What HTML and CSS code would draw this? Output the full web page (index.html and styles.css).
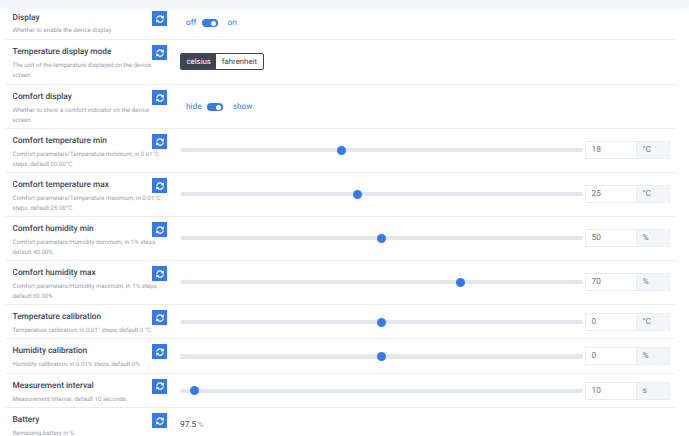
FILE: index.html
```html
<!DOCTYPE html>
<html lang="en">
<head>
    <meta charset="UTF-8">
    <meta name="viewport" content="width=device-width, initial-scale=1.0">
    <title>Device settings</title>
    <link rel="stylesheet" href="styles.css">
</head>
<body>
    <svg class="defs" width="0" height="0">
        <symbol id="sync" viewBox="0 0 512 512">
            <path d="M370.7 133.3C339.5 104 298.9 88 255.800 88c-77.500.100-144.300 53.200-162.800 126.900-1.300 5.400-6.100 9.200-11.700 9.200H24.100c-7.500 0-13.200-6.800-11.800-14.200C33.900 94.900 134.800 8 256 8c66.400 0 126.800 26.100 171.300 68.700L463 41c15.100-15.100 41-4.400 41 17v134c0 13.300-10.700 24-24 24H346c-21.400 0-32.100-25.900-17-41zM32 296h134c21.400 0 32.100 25.900 17 41l-41.700 41.700c31.200 29.300 71.800 45.300 114.900 45.300 77.400-.100 144.300-53.100 162.800-126.800 1.300-5.400 6.100-9.200 11.700-9.200h57.300c7.500 0 13.200 6.800 11.800 14.200C478.100 417.100 377.200 504 256 504c-66.400 0-126.800-26.100-171.300-68.700L49 471c-15.100 15.100-41 4.400-41-17V320c0-13.300 10.700-24 24-24z"/>
        </symbol>
    </svg>

    <div class="topbar"></div>

    <div class="settings">
        <div class="row row-display">
            <div class="info">
                <div class="name">Display</div>
                <div class="desc">Whether to enable the device display.</div>
            </div>
            <button class="sync"><svg><use href="#sync"/></svg></button>
            <div class="control toggle-line">
                <span>off</span><span class="toggle"></span><span>on</span>
            </div>
        </div>

        <div class="row row-mode">
            <div class="info">
                <div class="name">Temperature display mode</div>
                <div class="desc">The unit of the temperature displayed on the device screen.</div>
            </div>
            <button class="sync"><svg><use href="#sync"/></svg></button>
            <div class="control">
                <div class="btn-group">
                    <span class="opt active">celsius</span><span class="opt">fahrenheit</span>
                </div>
            </div>
        </div>

        <div class="row row-comfort">
            <div class="info">
                <div class="name">Comfort display</div>
                <div class="desc">Whether to show a comfort indicator on the device screen.</div>
            </div>
            <button class="sync"><svg><use href="#sync"/></svg></button>
            <div class="control toggle-line">
                <span>hide</span><span class="toggle"></span><span>show</span>
            </div>
        </div>

        <div class="row row-tall">
            <div class="info">
                <div class="name">Comfort temperature min</div>
                <div class="desc">Comfort parameters/Temperature minimum, in 0.01°C<br>steps, default 20.00°C.</div>
            </div>
            <button class="sync"><svg><use href="#sync"/></svg></button>
            <div class="control slider-line">
                <div class="track"><span class="thumb" style="left: 40.2%"></span></div>
                <div class="num"><span class="val">18</span><span class="unit">°C</span></div>
            </div>
        </div>

        <div class="row row-tall">
            <div class="info">
                <div class="name">Comfort temperature max</div>
                <div class="desc">Comfort parameters/Temperature maximum, in 0.01°C<br>steps, default 25.00°C.</div>
            </div>
            <button class="sync"><svg><use href="#sync"/></svg></button>
            <div class="control slider-line">
                <div class="track"><span class="thumb" style="left: 44.2%"></span></div>
                <div class="num"><span class="val">25</span><span class="unit">°C</span></div>
            </div>
        </div>

        <div class="row row-tall">
            <div class="info">
                <div class="name">Comfort humidity min</div>
                <div class="desc">Comfort parameters/Humidity minimum, in 1% steps,<br>default 40.00%.</div>
            </div>
            <button class="sync"><svg><use href="#sync"/></svg></button>
            <div class="control slider-line">
                <div class="track"><span class="thumb" style="left: 50.1%"></span></div>
                <div class="num"><span class="val">50</span><span class="unit">%</span></div>
            </div>
        </div>

        <div class="row row-tall">
            <div class="info">
                <div class="name">Comfort humidity max</div>
                <div class="desc">Comfort parameters/Humidity maximum, in 1% steps,<br>default 60.00%.</div>
            </div>
            <button class="sync"><svg><use href="#sync"/></svg></button>
            <div class="control slider-line">
                <div class="track"><span class="thumb" style="left: 69.7%"></span></div>
                <div class="num"><span class="val">70</span><span class="unit">%</span></div>
            </div>
        </div>

        <div class="row row-short">
            <div class="info">
                <div class="name">Temperature calibration</div>
                <div class="desc">Temperature calibration, in 0.01° steps, default 0 °C.</div>
            </div>
            <button class="sync"><svg><use href="#sync"/></svg></button>
            <div class="control slider-line">
                <div class="track"><span class="thumb" style="left: 50.1%"></span></div>
                <div class="num"><span class="val">0</span><span class="unit">°C</span></div>
            </div>
        </div>

        <div class="row row-short">
            <div class="info">
                <div class="name">Humidity calibration</div>
                <div class="desc">Humidity calibration, in 0.01% steps, default 0%.</div>
            </div>
            <button class="sync"><svg><use href="#sync"/></svg></button>
            <div class="control slider-line">
                <div class="track"><span class="thumb" style="left: 50.1%"></span></div>
                <div class="num"><span class="val">0</span><span class="unit">%</span></div>
            </div>
        </div>

        <div class="row row-short">
            <div class="info">
                <div class="name">Measurement interval</div>
                <div class="desc">Measurement interval, default 10 seconds.</div>
            </div>
            <button class="sync"><svg><use href="#sync"/></svg></button>
            <div class="control slider-line">
                <div class="track"><span class="thumb" style="left: 3.7%"></span></div>
                <div class="num"><span class="val">10</span><span class="unit">s</span></div>
            </div>
        </div>

        <div class="row row-last">
            <div class="info">
                <div class="name">Battery</div>
                <div class="desc">Remaining battery in %</div>
            </div>
            <button class="sync"><svg><use href="#sync"/></svg></button>
            <div class="control battery">97.5 <span class="pct">%</span></div>
        </div>
    </div>
</body>
</html>
```

FILE: styles.css
```css
html, body {
    height: 436px;
    overflow: hidden;
}
body {
    margin: 0;
    background: #fff;
    font-family: 'Roboto', sans-serif;
    color: #3a4150;
    text-rendering: geometricPrecision;
}
.defs {
    display: none;
}
.topbar {
    height: 5px;
    background: #f3f5f9;
    box-shadow: 0 2px 6px rgba(60,70,100,0.12);
}
.settings {
    margin: 1px 13px 0 6px;
}
.row {
    display: flex;
    align-items: flex-start;
    border-bottom: 1px solid #e9edf3;
    box-sizing: border-box;
    padding: 5px 6.5px 0 6.5px;
}
.row-display { height: 34px; }
.row-mode { height: 45px; }
.row-comfort { height: 44px; }
.row-tall { height: 44px; }
.row-short { height: 34.4px; }
.row-last { border-bottom: none; }
.info {
    width: 139.5px;
    flex: none;
}
.name {
    font-size: 8.3px;
    font-weight: 500;
    line-height: 14px;
    color: #3d4454;
}
.desc {
    margin-top: 2px;
    margin-right: -12px;
    font-size: 6.1px;
    line-height: 10px;
    color: #9aa1ad;
}
.row-display .desc {
    margin-top: 1px;
}
.sync {
    flex: none;
    position: relative;
    width: 15px;
    height: 15px;
    padding: 0;
    border: none;
    background: #3579ea;
    display: flex;
    align-items: center;
    justify-content: center;
}
.sync svg {
    width: 8px;
    height: 8px;
    fill: #fff;
}
.control {
    flex: 1;
    margin-left: 13px;
}
.toggle-line {
    display: flex;
    align-items: center;
    gap: 5px;
    padding: 6px 0 0 6px;
    font-size: 8.3px;
    line-height: 12px;
    color: #3579ea;
}
.row-comfort .toggle-line {
    padding-top: 11px;
}
.toggle-line span:last-child {
    margin-left: 5px;
}
.toggle {
    display: block;
    position: relative;
    width: 16px;
    height: 8px;
    border-radius: 4px;
    background: #3579ea;
}
.toggle::after {
    content: "";
    position: absolute;
    right: 2px;
    top: 1.5px;
    width: 5px;
    height: 5px;
    border-radius: 50%;
    background: #fff;
}
.btn-group {
    display: inline-flex;
    margin-top: 8px;
    border: 1px solid #3f4653;
    border-radius: 2px;
    font-size: 7.8px;
    line-height: 15px;
}
.opt {
    padding: 0 5.5px;
    color: #3f4653;
}
.opt.active {
    background: #3f4653;
    color: #fff;
}
.slider-line {
    display: flex;
    align-items: center;
    gap: 2px;
    padding-top: 7px;
}
.row-short .slider-line {
    padding-top: 3px;
}
.track {
    position: relative;
    flex: 1;
    height: 4.5px;
    border-radius: 2px;
    background: #e2e6ed;
}
.thumb {
    position: absolute;
    top: -2.25px;
    width: 9px;
    height: 9px;
    margin-left: -4.5px;
    border-radius: 50%;
    background: #3579ea;
}
.num {
    display: flex;
    width: 85px;
    height: 18px;
    border: 1px solid #e9edf3;
    box-sizing: border-box;
    font-size: 8.3px;
    line-height: 16px;
    color: #6c7480;
}
.val {
    flex: 1;
    padding-left: 6px;
}
.unit {
    width: 33px;
    box-sizing: border-box;
    padding-left: 6px;
    border-left: 1px solid #e9edf3;
    background: #f3f6f9;
}
.battery {
    padding-top: 7px;
    font-size: 8.3px;
    color: #3d4454;
}
.pct {
    color: #9aa1ad;
    font-size: 7px;
}
```
